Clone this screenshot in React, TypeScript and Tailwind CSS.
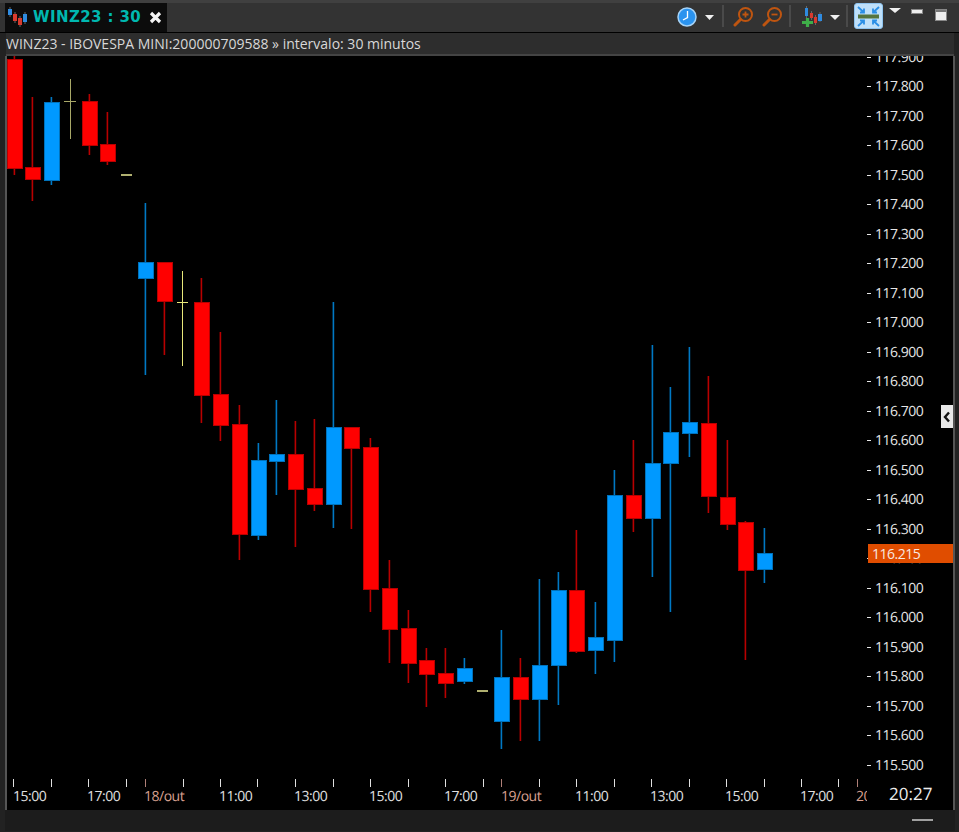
const R = "r", B = "b";
type C = [number, string, number, number, number, number];
// x-center, colour, wickTop, wickBottom, bodyTop, bodyBottom
const candles: C[] = [
  [14.5, R, 56, 175, 59, 168],
  [32.5, R, 97, 201, 167, 179],
  [51.5, B, 97, 185, 102, 180],
  [89, R, 94, 155, 101, 145],
  [107.5, R, 112, 165, 144, 161],
  [145, B, 203, 375, 262, 278],
  [164, R, 262, 355, 262, 301],
  [201.5, R, 278, 423, 302, 395],
  [220.5, R, 332, 441, 394, 425],
  [239.5, R, 405, 560, 424, 534],
  [258, B, 443, 540, 460, 535],
  [276.5, B, 400, 495, 454, 461],
  [295.5, R, 421, 547, 454, 489],
  [314.5, R, 419, 511, 488, 504],
  [333, B, 302, 528, 427, 504],
  [351.5, R, 427, 529, 427, 448],
  [370.5, R, 438, 612, 447, 589],
  [389.5, R, 560, 663, 588, 629],
  [408, R, 610, 683, 628, 663],
  [426.5, R, 648, 707, 660, 674],
  [445.5, R, 648, 698, 673, 683],
  [464.5, B, 658, 684, 668, 681],
  [501.5, B, 630, 749, 677, 721],
  [520.5, R, 658, 741, 677, 699],
  [539.5, B, 579, 741, 665, 699],
  [558, B, 572, 705, 590, 665],
  [576.5, R, 530, 653, 590, 651],
  [595.5, B, 602, 674, 637, 650],
  [614.5, B, 470, 662, 495, 640],
  [633, R, 440, 532, 495, 518],
  [652, B, 345, 577, 463, 518],
  [670.5, B, 387, 612, 432, 463],
  [689.5, B, 347, 457, 422, 433],
  [708, R, 376, 513, 423, 496],
  [727, R, 440, 530, 497, 524],
  [745.5, R, 521, 660, 522, 570],
  [764.5, B, 528, 583, 553, 569],
];
const prices = Array.from({ length: 25 }, (_, i) => 117900 - i * 100);
const fmt = (v: number) => `${Math.floor(v / 1000)}.${String(v % 1000).padStart(3, "0")}`;
const minorTicks = [13, 51, 88, 126, 145, 183, 220, 257, 295, 333, 370, 408, 445, 483, 501, 539, 576, 614, 651, 689, 726, 764, 801, 838, 857];
const timeLabels: [number, string, boolean][] = [
  [13, "15:00", false], [87, "17:00", false], [144, "18/out", true], [219, "11:00", false],
  [294, "13:00", false], [369, "15:00", false], [444, "17:00", false], [501, "19/out", true],
  [575, "11:00", false], [650, "13:00", false], [725, "15:00", false], [800, "17:00", false],
];
const font = "'Open Sans','Noto Sans',sans-serif";
function Caret({ w = 10 }: { w?: number }) {
  return <svg width={w} height="5" viewBox="0 0 10 5" preserveAspectRatio="none" className="shrink-0"><path d="M0 0H10L5 5Z" fill="#f0f0f0" /></svg>;
}
function Sep() {
  return <div className="h-[22px] w-[2px] bg-[#4a4a4a] -mt-[2px]" />;
}
function Zoom({ minus }: { minus?: boolean }) {
  return (
    <svg width="20" height="20" viewBox="0 0 20 20" fill="none" stroke="#bf5510">
      <circle cx="12.500" cy="7.500" r="6.500" strokeWidth="2" />
      <path d="M7.500 12.500L2 18" strokeWidth="3" strokeLinecap="round" />
      <path d={minus ? "M9.500 7.500H15.500" : "M9.500 7.500H15.500M12.500 4.500V10.500"} strokeWidth="1.800" />
    </svg>
  );
}
export default function App() {
  return (
    <div className="w-[959px] h-[832px] bg-[#222222] flex flex-col overflow-hidden" style={{ fontFamily: font }}>
      <div className="h-[33px] flex items-stretch bg-[#333333] border-t-[3px] border-t-[#404040] border-b border-b-black pl-[5px] pr-[12px] shrink-0">
        <div className="w-[162px] bg-[#0c0c0c] flex items-center gap-[5px] pl-[3px] shrink-0">
          <svg width="20" height="20" viewBox="0 0 20 20" className="-mt-[1px]">
            <path d="M2 0V10M7 5V16M12 9V20M17 5V17" stroke="#666" strokeWidth="1" />
            <rect x="0" y="2" width="4" height="6" fill="#2f8be0" />
            <rect x="5" y="7" width="4" height="7" fill="#d83a2e" />
            <rect x="10" y="11" width="4" height="7" fill="#d83a2e" />
            <rect x="15" y="7" width="4" height="8" fill="#2f8be0" />
          </svg>
          <span className="text-[15px] font-bold tracking-[0.4px] text-[#00b8b0] leading-none" style={{ fontFamily: "'DejaVu Sans',sans-serif" }}>WINZ23 : 30</span>
          <svg width="13" height="13" viewBox="0 0 13 13" className="ml-[3px]"><path d="M2 2L11 11M11 2L2 11" stroke="#f4f4f4" strokeWidth="3.200" /></svg>
        </div>
        <div className="flex-1 flex items-center justify-end pb-[1px]">
          <svg width="20" height="20" viewBox="0 0 20 20" className="mr-[8px]">
            <circle cx="10" cy="10" r="9" fill="#2a93ef" stroke="#a6d3f7" strokeWidth="1.500" />
            <path d="M10.500 4V10.500L6 13" stroke="#fff" strokeWidth="1.300" fill="none" />
          </svg>
          <Caret w={9} />
          <div className="w-[8px]" /><Sep /><div className="w-[9px]" />
          <Zoom /><div className="w-[9px]" /><Zoom minus />
          <div className="w-[7px]" /><Sep /><div className="w-[10px]" />
          <svg width="21" height="22" viewBox="0 0 21 22" className="-mt-[1px]">
            <path d="M5.500 0V12M10.500 5V14M14.500 9V19M19 6V16" stroke="#666" />
            <rect x="4" y="2" width="3" height="8" fill="#2f8be0" />
            <rect x="9" y="7" width="3" height="5" fill="#d83a2e" />
            <rect x="13" y="11" width="3" height="6" fill="#d83a2e" />
            <rect x="17" y="8" width="4" height="7" fill="#2f8be0" />
            <path d="M1 16.500H12M6.500 12V21" stroke="#3fae49" strokeWidth="3.200" />
          </svg>
          <div className="w-[8px]" /><Caret />
          <div className="w-[6px]" /><Sep /><div className="w-[6px]" />
          <div className="w-[29px] h-[26px] self-start rounded-[3px] bg-[#bfe0fa] border border-[#8fc4ef] flex items-center justify-center">
            <svg width="23" height="21" viewBox="0 0 23 21">
              <path d="M1 1L7 6.500M7 2.500V6.500H3M22 1L16 6.500M16 2.500V6.500H20M1 20L7 14.500M7 18.500V14.500H3M22 20L16 14.500M16 18.500V14.500H20" stroke="#2b8fe6" strokeWidth="1.800" fill="none" />
              <rect x="1" y="8.500" width="21" height="4" fill="#55743e" />
            </svg>
          </div>
          <div className="w-[6px]" />
          <div className="self-start mt-[5px]"><Caret w={12} /></div>
          <div className="w-[10px]" />
          <div className="w-[12px] h-[5px] bg-[#eeeeee] border border-[#888888] self-start mt-[6px]" />
          <div className="w-[12px]" />
          <div className="w-[12px] h-[12px] self-start mt-[6px] bg-[#eeeeee] border border-[#888888] flex flex-col">
            <div className="h-[2px] bg-[#777777]" />
          </div>
        </div>
      </div>
      <div className="ml-[6px] mr-[5px] h-[23px] bg-[#2d2d2d] flex items-center border-b-[2px] border-[#444444] text-[14px] text-[#d8d8d8] whitespace-nowrap shrink-0">
        WINZ23 - IBOVESPA MINI:200000709588 » intervalo: 30 minutos
      </div>
      <div className="ml-[5px] mr-[4px] flex-1 bg-black border-x-[2px] border-[#555555] relative">
        <svg width="946" height="754" viewBox="7 56 946 754" className="block" shapeRendering="crispEdges" style={{ fontFamily: font }}>
          {prices.map((p, i) => {
            const y = 56.500 + i * 29.520;
            return (
              <g key={p}>
                <path d={`M867 ${Math.round(y)}.5H871`} stroke="#e8e8e8" />
                <text x="875" y={y + 5} fontSize="14" letterSpacing="-0.5" fill="#e6e6e6" textRendering="geometricPrecision">{fmt(p)}</text>
              </g>
            );
          })}
          <path d="M70.500 79V139M64 101.500H76" stroke="#a8a868" fill="none" />
          <rect x="121" y="174" width="11" height="2" fill="#b0b070" />
          <path d="M182.500 271V366M177 302.500H188" stroke="#e8e87a" fill="none" />
          <rect x="477" y="690" width="11" height="2" fill="#b0b070" />
          {candles.map(([x, c, wt, wb, bt, bb]) => {
            const wx = Math.floor(x);
            const left = Math.max(7, wx - 7);
            const right = wx + 8;
            return (
              <g key={x}>
                <rect x={wx - 0.400} y={wt} width="1.600" height={wb - wt} shapeRendering="geometricPrecision" fill={c === R ? "#b80000" : "#0078c4"} />
                <rect x={left} y={bt} width={right - left} height={bb - bt} fill={c === R ? "#ff0000" : "#0099ff"} stroke={c === R ? "#b80000" : "#0072bb"} strokeWidth="1" />
              </g>
            );
          })}
          {minorTicks.map((x) => (
            <rect key={x} x={x} y="779" width="1" height="8" fill={x === 145 || x === 501 || x === 857 ? "#b08078" : "#e0e0e0"} />
          ))}
          {timeLabels.map(([x, t, d], i) => (
            <text key={i} x={x} y="801" fontSize="14" letterSpacing="-0.5" fill={d ? "#d8a090" : "#e0e0e0"} textRendering="geometricPrecision">{t}</text>
          ))}
          <svg x="855" y="788" width="12" height="20" viewBox="0 0 12 20" overflow="hidden">
            <text x="1" y="13" fontSize="14" letterSpacing="-0.5" fill="#d8a090" textRendering="geometricPrecision">20</text>
          </svg>
          <text x="889" y="800" fontSize="17" fill="#ececec" textRendering="geometricPrecision">20:27</text>
        </svg>
        <div className="absolute left-[934px] top-[349px] w-[12px] h-[23px] bg-[#e8e8e8] flex items-center justify-center">
          <svg width="8" height="12" viewBox="0 0 8 12"><path d="M6 1.500L2 6L6 10.500" stroke="#111" strokeWidth="2.400" fill="none" /></svg>
        </div>
        <div className="absolute left-[861px] top-[488px] w-[85px] h-[19px] bg-[#e04d00] text-[14px] tracking-[-0.5px] leading-[19px] pl-[4px] text-[#f8e8e0]">116.215</div>
      </div>
      <div className="h-[21px] ml-[5px] mr-[4px] bg-[#1c1c1c] relative shrink-0 mb-[1px]">
        <div className="absolute left-[907px] top-[9px] w-[21px] h-[2px] bg-[#a0a0a0]" />
      </div>
    </div>
  );
}
